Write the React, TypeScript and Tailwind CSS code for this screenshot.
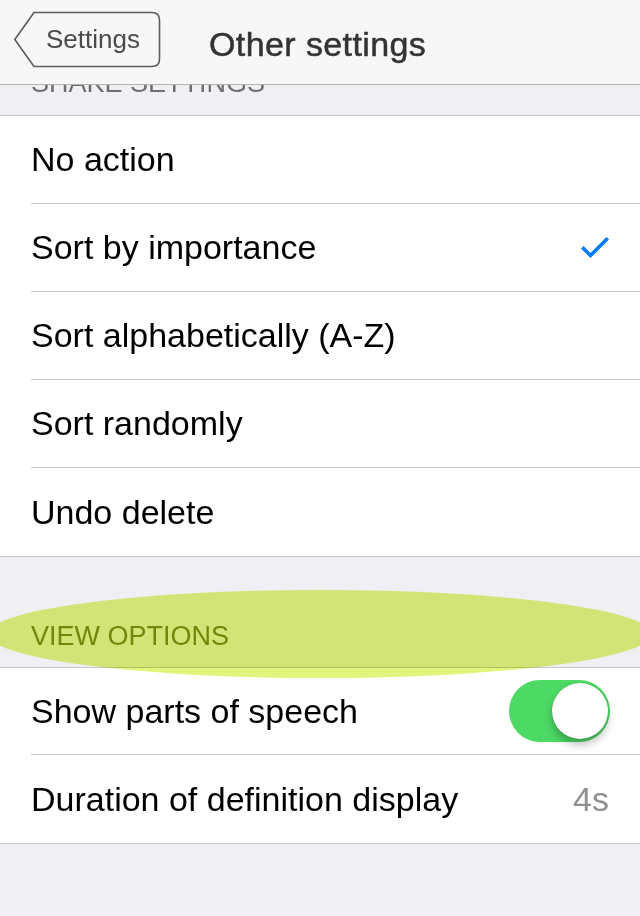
import React, { useState } from 'react';

const font = { fontFamily: '"Liberation Sans", Arial, sans-serif' };

const shakeOptions = ['No action', 'Sort by importance', 'Sort alphabetically (A-Z)', 'Sort randomly', 'Undo delete'];

const Check = () => (
  <svg width="28" height="22" viewBox="0 0 28 22" className="shrink-0">
    <path d="M2.5 11.5 L9.5 18.5 L25.5 2.5" fill="none" stroke="#007aff" strokeWidth="3.6" strokeLinecap="square" />
  </svg>
);

const Toggle: React.FC<{ on: boolean; onChange: () => void }> = ({ on, onChange }) => (
  <button
    onClick={onChange}
    className={`relative w-[101px] h-[62px] rounded-full shrink-0 ${on ? 'bg-[#4cd964]' : 'bg-[#e5e5ea]'}`}
  >
    <span
      className={`absolute top-[3px] w-[56px] h-[56px] rounded-full bg-white shadow-[0_6px_8px_rgba(0,0,0,0.25),0_0_1px_rgba(0,0,0,0.3)] ${on ? 'left-[43px]' : 'left-[3px]'}`}
    />
  </button>
);

export default function App() {
  const [selected, setSelected] = useState('Sort by importance');
  const [showParts, setShowParts] = useState(true);

  return (
    <div className="relative w-[640px] h-[916px] bg-[#efeff4] overflow-hidden" style={font}>
      {/* Nav bar */}
      <div className="relative z-10 h-[85px] bg-[#f7f7f7] border-b border-[#b2b2b2] flex items-center">
        <button className="relative ml-[13px] mt-[-6px] h-[57px] w-[148px] shrink-0">
          <svg width="148" height="57" viewBox="0 0 148 57" className="absolute inset-0">
            <path
              d="M21 1.5 H139 Q146.5 1.5 146.5 9 V48 Q146.5 55.5 139 55.5 H21 L1.8 28.5 Z"
              fill="none"
              stroke="#5c5c5c"
              strokeWidth="1.6"
              strokeLinejoin="round"
            />
          </svg>
          <span className="relative block pl-[33px] text-[26px] leading-none text-[#4a4a4a] text-left">Settings</span>
        </button>
        <h1 className="ml-[48px] mt-[4px] text-[34px] leading-none tracking-[0.4px] text-[#333] [-webkit-text-stroke:0.5px_#333]">
          Other settings
        </h1>
      </div>

      {/* Shake settings header (scrolled under the bar) */}
      <div className="h-[31px] overflow-hidden border-b border-[#c8c7cc]">
        <div className="mt-[-17px] pl-[31px] text-[27px] leading-[30px] text-[#6d6d72]">SHAKE SETTINGS</div>
      </div>

      <div className="bg-white border-b border-[#c8c7cc]">
        {shakeOptions.map((opt, i) => (
          <div key={opt} onClick={() => setSelected(opt)} className="pl-[31px] cursor-pointer">
            <div
              className={`h-[88px] flex items-center justify-between pr-[31px] text-[34px] text-black ${
                i < shakeOptions.length - 1 ? 'border-b border-[#c8c7cc]' : ''
              }`}
            >
              <span>{opt}</span>
              {selected === opt && <Check />}
            </div>
          </div>
        ))}
      </div>

      {/* View options */}
      <div className="h-[110px] flex items-end pb-[17px] pl-[31px]">
        <span className="relative z-20 text-[27px] leading-none text-[#72860a]">VIEW OPTIONS</span>
      </div>

      <div className="bg-white border-t border-b border-[#c8c7cc]">
        <div className="pl-[31px]">
          <div className="h-[87px] flex items-center justify-between pr-[30px] text-[34px] text-black border-b border-[#c8c7cc]">
            <span>Show parts of speech</span>
            <Toggle on={showParts} onChange={() => setShowParts(!showParts)} />
          </div>
        </div>
        <div className="pl-[31px] h-[88px] flex items-center justify-between pr-[31px] text-[34px] text-black">
          <span>Duration of definition display</span>
          <span className="text-[#8e8e93]">4s</span>
        </div>
      </div>

      {/* Highlight annotation */}
      <div className="absolute z-10 left-[-12px] top-[590px] w-[664px] h-[88px] rounded-[50%] bg-[#e2f47c] mix-blend-multiply pointer-events-none" />
    </div>
  );
}
